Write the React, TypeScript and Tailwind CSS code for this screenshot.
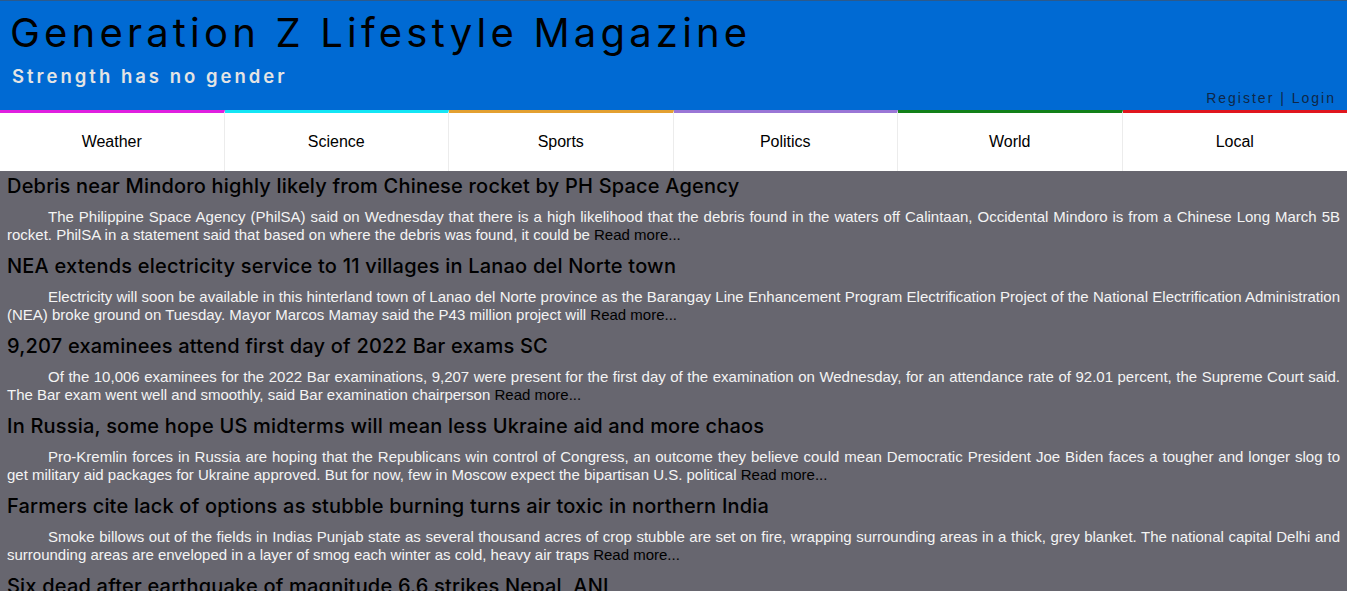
const NAV = [
  { label: "Weather", border: "border-t-[#e01fe0]" },
  { label: "Science", border: "border-t-[#14e6f5]" },
  { label: "Sports", border: "border-t-[#e3a031]" },
  { label: "Politics", border: "border-t-[#9a76d6]" },
  { label: "World", border: "border-t-[#128018]" },
  { label: "Local", border: "border-t-[#e0161e]" },
];

const ARTICLES = [
  {
    title: "Debris near Mindoro highly likely from Chinese rocket by PH Space Agency",
    body: "The Philippine Space Agency (PhilSA) said on Wednesday that there is a high likelihood that the debris found in the waters off Calintaan, Occidental Mindoro is from a Chinese Long March 5B rocket. PhilSA in a statement said that based on where the debris was found, it could be",
  },
  {
    title: "NEA extends electricity service to 11 villages in Lanao del Norte town",
    body: "Electricity will soon be available in this hinterland town of Lanao del Norte province as the Barangay Line Enhancement Program Electrification Project of the National Electrification Administration (NEA) broke ground on Tuesday. Mayor Marcos Mamay said the P43 million project will",
  },
  {
    title: "9,207 examinees attend first day of 2022 Bar exams SC",
    body: "Of the 10,006 examinees for the 2022 Bar examinations, 9,207 were present for the first day of the examination on Wednesday, for an attendance rate of 92.01 percent, the Supreme Court said. The Bar exam went well and smoothly, said Bar examination chairperson",
  },
  {
    title: "In Russia, some hope US midterms will mean less Ukraine aid and more chaos",
    body: "Pro-Kremlin forces in Russia are hoping that the Republicans win control of Congress, an outcome they believe could mean Democratic President Joe Biden faces a tougher and longer slog to get military aid packages for Ukraine approved. But for now, few in Moscow expect the bipartisan U.S. political",
  },
  {
    title: "Farmers cite lack of options as stubble burning turns air toxic in northern India",
    body: "Smoke billows out of the fields in Indias Punjab state as several thousand acres of crop stubble are set on fire, wrapping surrounding areas in a thick, grey blanket. The national capital Delhi and surrounding areas are enveloped in a layer of smog each winter as cold, heavy air traps",
  },
  {
    title: "Six dead after earthquake of magnitude 6.6 strikes Nepal, ANI",
    body: "At least six people were killed after an earthquake of magnitude 6.6 struck Nepal early on Wednesday, with tremors felt as far away as the Indian capital New Delhi, officials said. The quake hit Doti district in the far west of the country",
  },
];

export default function App() {
  return (
    <div className="min-h-screen bg-[#67666f]">
      <header className="bg-[#006ad3] border-t border-t-[#2c5a8c] flex flex-col">
        <h1 className="font-['Inter',sans-serif] text-[40px] leading-[48px] tracking-[4.2px] text-black pl-[10px] pt-[8px]">
          Generation Z Lifestyle Magazine
        </h1>
        <div className="font-['Inter',sans-serif] font-semibold text-[18.5px] leading-[24px] tracking-[3px] text-[#e4e4e4] pl-[12px] pt-[7px]">
          Strength has no gender
        </div>
        <div className="flex justify-end pr-[11px] -mt-[5px] h-[27px] items-center">
          <span className="font-['Liberation_Sans',Arial,sans-serif] text-[14px] tracking-[2px] text-[#0f2747] translate-y-[2px]">
            Register | Login
          </span>
        </div>
      </header>

      <nav className="grid grid-cols-6 bg-white">
        {NAV.map((item) => (
          <a
            key={item.label}
            className={`h-[61px] border-t-[3px] ${item.border} border-r border-r-[#ececec] last:border-r-0 flex items-center justify-center font-['Liberation_Sans',Arial,sans-serif] text-[16px] text-black`}
          >
            {item.label}
          </a>
        ))}
      </nav>

      <main className="px-[7px] pb-4">
        {ARTICLES.map((a) => (
          <article key={a.title}>
            <h2 className="font-['Inter',sans-serif] font-medium text-[20px] leading-[30px] text-black tracking-[0.2px]">
              {a.title}
            </h2>
            <p className="mt-[7px] mb-[7px] font-['Liberation_Sans',Arial,sans-serif] text-[15px] leading-[18px] text-[#f4f4f4] text-justify indent-[41px]">
              {a.body} <span className="text-black">Read more...</span>
            </p>
          </article>
        ))}
      </main>
    </div>
  );
}
